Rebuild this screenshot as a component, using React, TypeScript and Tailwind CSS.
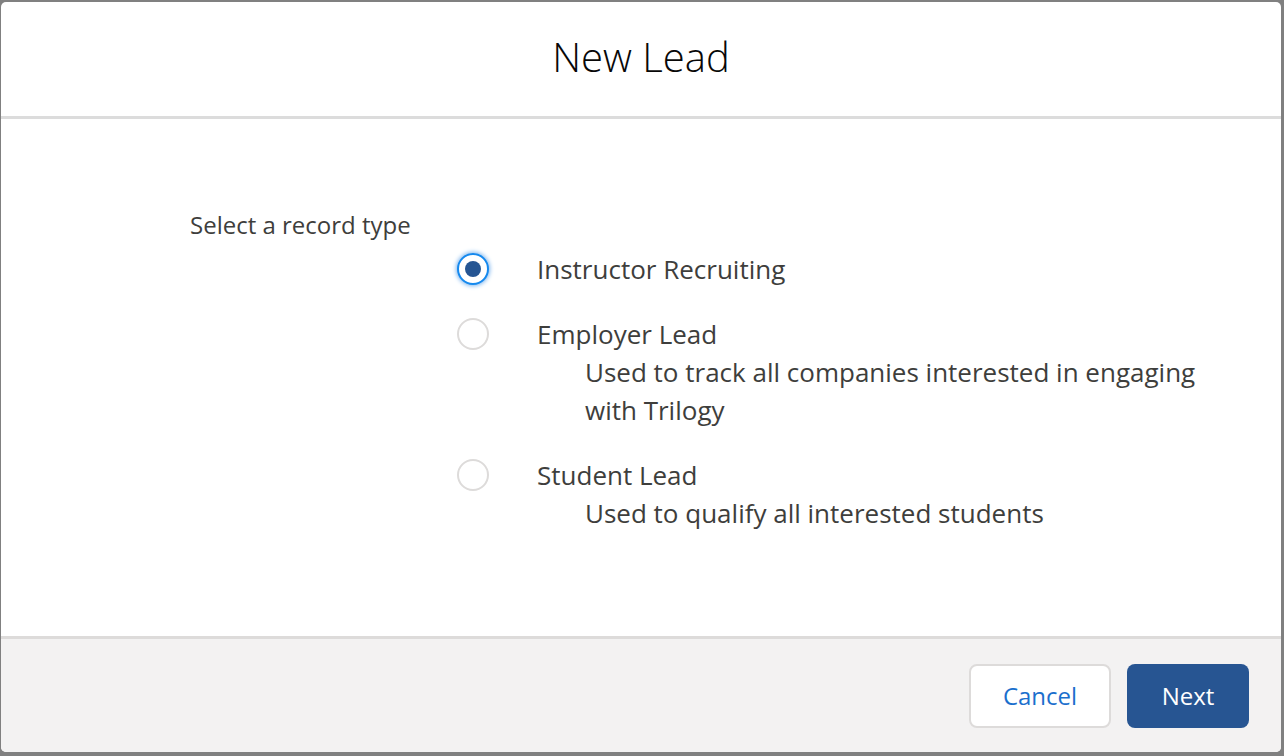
import React from "react";

const font = { fontFamily: '"Open Sans", "Noto Sans", sans-serif' };

function Radio({ checked }: { checked?: boolean }) {
  if (checked) {
    return (
      <span className="mt-[3px] flex h-[32px] w-[32px] shrink-0 items-center justify-center rounded-full border-[2px] border-[#1589ee] bg-white shadow-[0_0_4px_1px_#7fb6ee]">
        <span className="h-[16px] w-[16px] rounded-full bg-[#255593]" />
      </span>
    );
  }
  return (
    <span className="mt-[3px] block h-[32px] w-[32px] shrink-0 rounded-full border-[2px] border-[#dddbda] bg-white" />
  );
}

function Option({
  label,
  desc,
  checked,
}: {
  label: string;
  desc?: React.ReactNode;
  checked?: boolean;
}) {
  return (
    <div className="flex items-start">
      <Radio checked={checked} />
      <div className="ml-[48px] flex flex-col">
        <span className="text-[26px] leading-[38px] text-[#3e3e3c]">{label}</span>
        {desc && (
          <span className="pl-[48px] text-[26px] leading-[38px] text-[#3e3e3c]">{desc}</span>
        )}
      </div>
    </div>
  );
}

export default function App() {
  return (
    <div
      className="h-[756px] w-[1284px] overflow-hidden bg-[#808080] pl-[1px] pt-[2px]"
      style={font}
    >
      <div className="flex h-[750px] w-[1280px] flex-col overflow-hidden rounded-[5px] bg-white">
        <div className="flex h-[117px] shrink-0 items-center justify-center border-b-[3px] border-[#dcdcdc] pb-[4px]">
          <h2 className="text-[40px] font-light leading-[44px] text-[#080707]">New Lead</h2>
        </div>
        <div className="flex flex-1 flex-col pl-[189px] pt-[87px]">
          <div className="text-[24px] leading-[38px] text-[#3e3e3c]">Select a record type</div>
          <div className="ml-[267px] mt-[6px] flex flex-col gap-[27px]">
            <Option label="Instructor Recruiting" checked />
            <Option
              label="Employer Lead"
              desc={
                <>
                  Used to track all companies interested in engaging
                  <br />
                  with Trilogy
                </>
              }
            />
            <Option label="Student Lead" desc="Used to qualify all interested students" />
          </div>
        </div>
        <div className="flex h-[116px] shrink-0 items-center justify-end gap-[16px] border-t-[3px] border-[#dddbda] bg-[#f3f2f2] pr-[32px]">
          <button className="h-[64px] w-[142px] rounded-[8px] border-[2px] border-[#dddbda] bg-white text-[24px] text-[#1b6fcd]">
            Cancel
          </button>
          <button className="h-[64px] w-[122px] rounded-[8px] bg-[#275592] text-[24px] text-white">
            Next
          </button>
        </div>
      </div>
    </div>
  );
}
